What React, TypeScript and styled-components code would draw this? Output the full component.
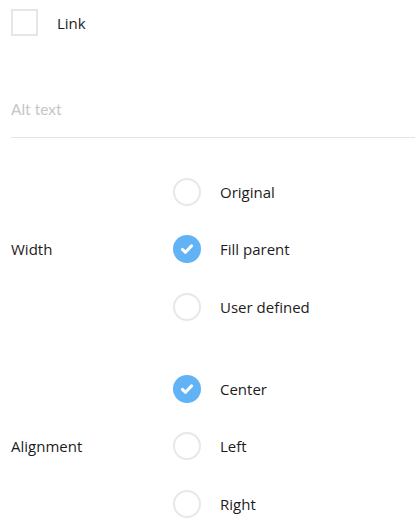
import React, { useState } from "react";
import styled, { createGlobalStyle } from "styled-components";

const GlobalStyle = createGlobalStyle`
  body {
    margin: 0;
    background: #fff;
    font-family: "Open Sans", "Noto Sans", sans-serif;
    color: #1c1c1c;
  }
`;

const Panel = styled.div`
  width: 420px;
  padding: 9px 5px 0 11px;
  box-sizing: border-box;
`;

const LinkRow = styled.label`
  display: flex;
  align-items: center;
  gap: 19px;
  height: 27px;
  font-size: 15px;
  cursor: pointer;
`;

const Box = styled.span`
  width: 27px;
  height: 27px;
  box-sizing: border-box;
  border: 2px solid #e6e6e6;
  background: #fff;
`;

const AltInput = styled.input`
  display: block;
  box-sizing: border-box;
  width: 100%;
  height: 41px;
  margin-top: 61px;
  padding: 0 0 16px;
  border: none;
  border-bottom: 1px solid #e4e4e4;
  outline: none;
  font-family: "Lato", sans-serif;
  font-size: 15.5px;
  color: #333;
  &::placeholder {
    color: #c6c6c6;
  }
`;

const Group = styled.div<{ $first?: boolean }>`
  display: flex;
  align-items: center;
  margin-top: ${(p) => (p.$first ? "25px" : "24.5px")};
`;

const GroupLabel = styled.div`
  width: 162px;
  font-size: 15px;
`;

const Options = styled.div`
  display: flex;
  flex-direction: column;
`;

const Option = styled.label`
  display: flex;
  align-items: center;
  gap: 19px;
  height: 57.5px;
  font-size: 15px;
  cursor: pointer;
`;

const Radio = styled.span<{ $on: boolean }>`
  width: 28px;
  height: 28px;
  box-sizing: border-box;
  border-radius: 50%;
  display: flex;
  align-items: center;
  justify-content: center;
  border: ${(p) => (p.$on ? "none" : "2px solid #e8e8e8")};
  background: ${(p) => (p.$on ? "#62b2f6" : "#fff")};
`;

const Check = () => (
  <svg width="16" height="16" viewBox="0 0 16 16">
    <path
      d="M3.4 8.4 L6.5 11.3 L12.6 4.9"
      fill="none"
      stroke="#fff"
      strokeWidth="3"
      strokeLinecap="round"
      strokeLinejoin="round"
    />
  </svg>
);

type GroupProps = {
  label: string;
  options: string[];
  value: string;
  onChange: (v: string) => void;
  first?: boolean;
};

const RadioGroup = ({ label, options, value, onChange, first }: GroupProps) => (
  <Group $first={first}>
    <GroupLabel>{label}</GroupLabel>
    <Options>
      {options.map((o) => (
        <Option key={o} onClick={() => onChange(o)}>
          <Radio $on={o === value}>{o === value && <Check />}</Radio>
          {o}
        </Option>
      ))}
    </Options>
  </Group>
);

export default function App() {
  const [width, setWidth] = useState("Fill parent");
  const [align, setAlign] = useState("Center");

  return (
    <>
      <GlobalStyle />
      <Panel>
        <LinkRow>
          <Box />
          Link
        </LinkRow>
        <AltInput placeholder="Alt text" />
        <RadioGroup
          first
          label="Width"
          options={["Original", "Fill parent", "User defined"]}
          value={width}
          onChange={setWidth}
        />
        <RadioGroup
          label="Alignment"
          options={["Center", "Left", "Right"]}
          value={align}
          onChange={setAlign}
        />
      </Panel>
    </>
  );
}
